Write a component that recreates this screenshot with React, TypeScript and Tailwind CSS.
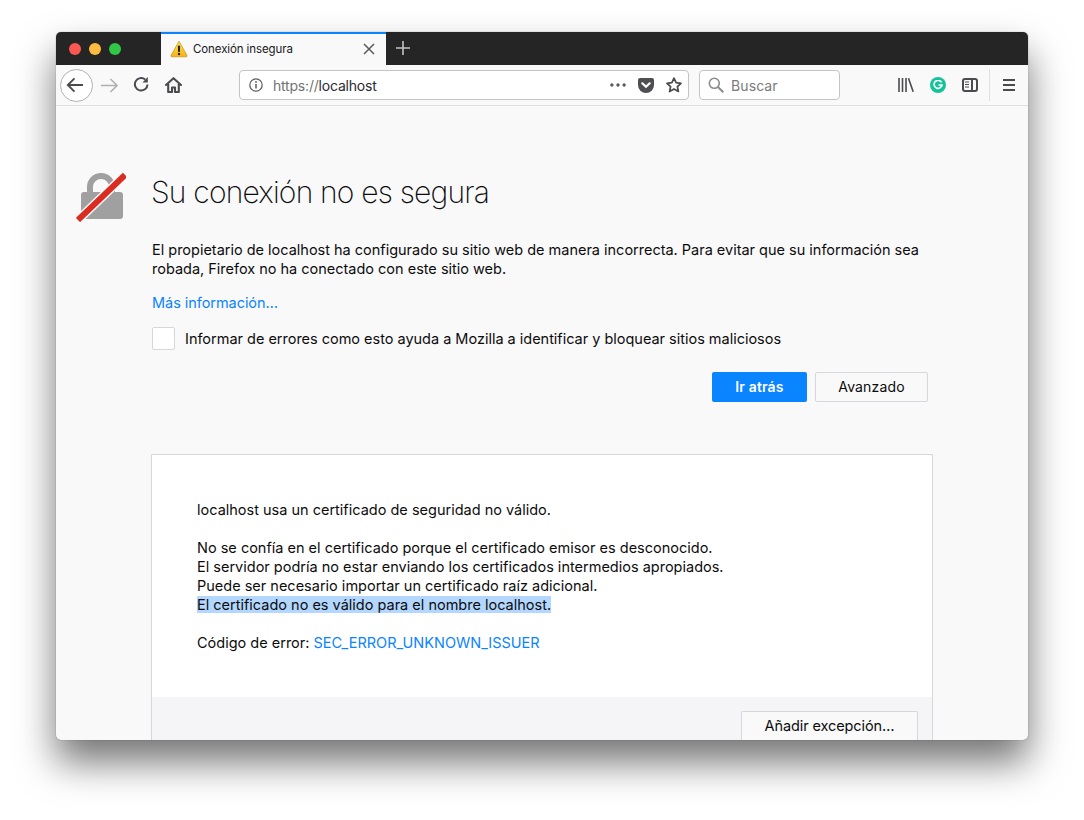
import React from "react";

const Toolbtn = ({ children, cls }: { children: React.ReactNode; cls: string }) => (
  <div className={`flex items-center justify-center shrink-0 ${cls}`}>{children}</div>
);

export default function App() {
  return (
    <div className="w-[1084px] h-[820px] bg-white overflow-hidden pt-[32px] pl-[56px] font-['Inter',sans-serif] text-[#0c0c0d]">
      <div className="w-[972px] h-[708px] rounded-[5px] bg-[#f9f9fa] overflow-hidden flex flex-col shadow-[0_22px_38px_rgba(0,0,0,0.55),0_0_1px_rgba(0,0,0,0.55)]">
        {/* Tab bar */}
        <div className="h-[33px] shrink-0 bg-[#252525] flex">
          <div className="w-[105px] pl-[13px] flex items-center gap-[8px] shrink-0">
            <span className="w-[12px] h-[12px] rounded-full bg-[#fc5753]" />
            <span className="w-[12px] h-[12px] rounded-full bg-[#fdbc40]" />
            <span className="w-[12px] h-[12px] rounded-full bg-[#33c748]" />
          </div>
          <div className="w-[225px] bg-[#f9f9fa] border-t-2 border-[#0a84ff] flex items-center pl-[9px] pr-[10px] shrink-0">
            <svg width="18" height="18" viewBox="0 0 18 18" className="mt-[-2px]">
              <defs>
                <linearGradient id="w" x1="0" y1="0" x2="0" y2="1">
                  <stop offset="0" stopColor="#fde26a" />
                  <stop offset="1" stopColor="#f4b312" />
                </linearGradient>
              </defs>
              <path d="M9 1.2 L17 15.6 Q17.3 16.8 16 16.8 H2 Q.7 16.8 1 15.6 Z" fill="url(#w)" stroke="#c98f10" strokeWidth=".7" />
              <rect x="8" y="5.5" width="2" height="6.5" rx=".8" fill="#2b2111" />
              <circle cx="9" cy="14" r="1.2" fill="#2b2111" />
            </svg>
            <span className="ml-[5px] mt-[-2px] text-[11.5px] leading-[16px] tracking-[-0.1px] text-[#18181a] flex-1">Conexión insegura</span>
            <svg width="12" height="12" viewBox="0 0 12 12" stroke="#5a5a5c" strokeWidth="1.5" className="mt-[-2px] ml-[-1px] mr-[1px]">
              <path d="M1 1 L11 11 M11 1 L1 11" />
            </svg>
          </div>
          <div className="w-[34px] flex items-center justify-center mb-[2px]">
            <svg width="14" height="14" viewBox="0 0 14 14" stroke="#c4c4c4" strokeWidth="1.6">
              <path d="M7 0 V14 M0 7 H14" />
            </svg>
          </div>
        </div>
        {/* Toolbar */}
        <div className="h-[41px] shrink-0 bg-[#f9f9fa] border-b border-[#e0e0e2] flex items-center pl-[4px]">
          <Toolbtn cls="w-[33px] h-[33px] rounded-full border border-[#b1b1b3] bg-white">
            <svg width="18" height="16" viewBox="0 0 18 16" fill="none" stroke="#4a4a4f" strokeWidth="1.9" className="ml-[-3px]">
              <path d="M17 8 H2 M8.5 1.3 L1.8 8 L8.5 14.7" />
            </svg>
          </Toolbtn>
          <Toolbtn cls="w-[32px] h-[32px]">
            <svg width="17" height="15" viewBox="0 0 17 15" fill="none" stroke="#b1b1b3" strokeWidth="1.6">
              <path d="M0 7.5 H15.5 M9.5 1 L16 7.5 L9.5 14" />
            </svg>
          </Toolbtn>
          <Toolbtn cls="w-[32px] h-[32px] mb-[2px]">
            <svg width="16" height="16" viewBox="0 0 16 16" fill="none" stroke="#4a4a4f" strokeWidth="2">
              <path d="M14.5 8.5 A6.3 6.3 0 1 1 12.2 3.4" />
              <path d="M14.8 1 V6.4 H9.4 Z" fill="#4a4a4f" stroke="none" />
            </svg>
          </Toolbtn>
          <Toolbtn cls="w-[32px] h-[32px] mb-[1px]">
            <svg width="17" height="16" viewBox="0 0 17 16" fill="none" stroke="#4a4a4f" strokeWidth="2.1" strokeLinejoin="round">
              <path d="M1 8 L8.5 1.2 L16 8" strokeLinecap="round" />
              <path d="M3.2 7 V15 H7 V10.5 H10 V15 H13.8 V7" />
            </svg>
          </Toolbtn>
          {/* URL bar */}
          <div className="ml-[50px] w-[450px] h-[30px] bg-white border border-[#c4c4c6] rounded-[4px] flex items-center pl-[9px] pr-[6px] shrink-0">
            <svg width="14" height="14" viewBox="0 0 14 14" fill="none" stroke="#5b5b5f" strokeWidth="1.2">
              <circle cx="7" cy="7" r="6.2" />
              <path d="M7 6 V10.5" strokeWidth="1.5" />
              <circle cx="7" cy="3.9" r=".9" fill="#5b5b5f" stroke="none" />
            </svg>
            <span className="ml-[10px] text-[14px] tracking-[-0.2px] flex-1">
              <span className="text-[#737373]">https://</span>
              <span className="text-[#2a2a2e]">localhost</span>
            </span>
            <svg width="16" height="4" viewBox="0 0 17 4" fill="#5b5b5f" className="mr-[12px]">
              <circle cx="2" cy="2" r="1.8" /><circle cx="8.5" cy="2" r="1.8" /><circle cx="15" cy="2" r="1.8" />
            </svg>
            <svg width="16" height="15" viewBox="0 0 16 15" className="mr-[12px]">
              <path d="M2 0 H14 Q16 0 16 2 V7 A8 8 0 0 1 0 7 V2 Q0 0 2 0 Z" fill="#4f4f53" />
              <path d="M4.3 5.3 L8 8.8 L11.7 5.3" fill="none" stroke="#fff" strokeWidth="2.2" strokeLinecap="round" />
            </svg>
            <svg width="16" height="16" viewBox="0 0 16 16" fill="none" stroke="#4a4a4f" strokeWidth="1.7" strokeLinejoin="round">
              <path d="M8 1.2 L10.1 5.7 L15 6.3 L11.4 9.6 L12.4 14.5 L8 12 L3.6 14.5 L4.6 9.6 L1 6.3 L5.9 5.7 Z" />
            </svg>
          </div>
          {/* Search bar */}
          <div className="ml-[10px] w-[141px] h-[30px] bg-white border border-[#c4c4c6] rounded-[4px] flex items-center pl-[8px] shrink-0">
            <svg width="16" height="16" viewBox="0 0 16 16" fill="none" stroke="#8c8c8f" strokeWidth="1.6">
              <circle cx="6.3" cy="6.3" r="5" />
              <path d="M10 10 L15.3 15.3" strokeWidth="2" />
            </svg>
            <span className="ml-[7px] text-[14px] tracking-[0.1px] text-[#7a7a7c]">Buscar</span>
          </div>
          <Toolbtn cls="ml-[58px] w-[16px] h-[16px]">
            <svg width="16" height="14" viewBox="0 0 16 14" fill="none" stroke="#4a4a4f" strokeWidth="1.6">
              <path d="M1 0 V14 M4.5 0 V14 M8 0 V14 M10.5 .3 L15.2 13.8" />
            </svg>
          </Toolbtn>
          <Toolbtn cls="ml-[16px] w-[16px] h-[16px] rounded-full bg-[#15c39a]">
            <svg width="10" height="10" viewBox="0 0 10 10" fill="none" stroke="#fff" strokeWidth="1.6">
              <path d="M8.5 2.3 A4 4 0 1 0 9 5 H5.5" />
            </svg>
          </Toolbtn>
          <Toolbtn cls="ml-[16px] w-[16px] h-[14px] rounded-[3px] border-2 border-[#4a4a4f] justify-start pl-[1px] pt-[0px]">
            <svg width="5" height="8" viewBox="0 0 5 8" stroke="#4a4a4f" strokeWidth="1"><path d="M0 1 H4 M0 3.5 H4 M0 6 H4" /></svg>
            <span className="w-[1.5px] h-full bg-[#4a4a4f] ml-[1px]" />
          </Toolbtn>
          <div className="ml-[11px] w-px h-[32px] bg-[#e0e0e2]" />
          <div className="ml-[13px] w-[12px] flex flex-col gap-[3px]">
            <span className="h-[2px] bg-[#4a4a4f]" />
            <span className="h-[2px] bg-[#4a4a4f]" />
            <span className="h-[2px] bg-[#4a4a4f]" />
          </div>
        </div>
        {/* Page */}
        <div className="flex-1 min-h-0 overflow-hidden pt-[66px] pl-[20px] flex">
          <svg width="50" height="50" viewBox="0 0 50 50" className="shrink-0">
            <path d="M11 20 V15 A14 14 0 0 1 39 15 V20 H33 V15 A8 8 0 0 0 17 15 V20 Z" fill="#a0a0a0" />
            <rect x="5" y="20" width="42" height="27" rx="3" fill="#a0a0a0" />
            <path d="M2 48 L49 3" stroke="#f9f9fa" strokeWidth="9" />
            <path d="M2 48 L49 3" stroke="#d92d21" strokeWidth="6" />
          </svg>
          <div className="ml-[25px] w-[782px] shrink-0">
            <h1 className="text-[30px] leading-[40px] font-extralight tracking-[-0.8px] text-[#0c0c0d]">Su conexión no es segura</h1>
            <div className="pl-[1px]">
              <p className="mt-[28px] text-[14.5px] leading-[19px] w-[776px] tracking-[-0.01px]">
                El propietario de localhost ha configurado su sitio web de manera incorrecta. Para evitar que su información sea robada, Firefox no ha conectado con este sitio web.
              </p>
              <a className="block mt-[15px] text-[14.5px] leading-[19px] text-[#0a84ff] tracking-[-0.05px]">Más información…</a>
              <div className="mt-[15px] flex items-center">
                <span className="w-[23px] h-[23px] rounded-[2px] bg-white border border-[#d7d7db] shrink-0" />
                <span className="ml-[10px] text-[14.5px] leading-[19px] tracking-[-0.015px]">Informar de errores como esto ayuda a Mozilla a identificar y bloquear sitios maliciosos</span>
              </div>
              <div className="mt-[22px] flex justify-end gap-[8px] w-[776px]">
                <button className="w-[95px] h-[30px] pb-[1px] rounded-[2px] bg-[#0a84ff] text-white font-semibold text-[14px] tracking-[0.15px]">Ir atrás</button>
                <button className="w-[113px] h-[30px] pb-[2px] rounded-[2px] bg-[#f9f9fa] border border-[#d7d7db] text-[14px] tracking-[0.15px]">Avanzado</button>
              </div>
            </div>
            <div className="mt-[52px] bg-white border border-[#d7d7db] border-b-0 flex flex-col h-[286px]">
              <div className="flex-1 pt-[45px] pl-[45px] text-[14.5px] leading-[19px] tracking-[0px]">
                <p>localhost usa un certificado de seguridad no válido.</p>
                <p className="mt-[19px]">No se confía en el certificado porque el certificado emisor es desconocido.</p>
                <p>El servidor podría no estar enviando los certificados intermedios apropiados.</p>
                <p>Puede ser necesario importar un certificado raíz adicional.</p>
                <p><span className="bg-[#b3d7ff]">El certificado no es válido para el nombre localhost.</span></p>
                <p className="mt-[19px]">Código de error: <span className="text-[#0a84ff]">SEC_ERROR_UNKNOWN_ISSUER</span></p>
              </div>
              <div className="h-[43px] bg-[#f5f5f7] flex justify-end pt-[14px] pr-[14px]">
                <div className="w-[177px] h-[29px] bg-[#f9f9fa] border border-[#d7d7db] border-b-0 rounded-t-[2px] text-center text-[14.5px] leading-[27px] tracking-[-0.1px]">Añadir excepción…</div>
              </div>
            </div>
          </div>
        </div>
      </div>
    </div>
  );
}
